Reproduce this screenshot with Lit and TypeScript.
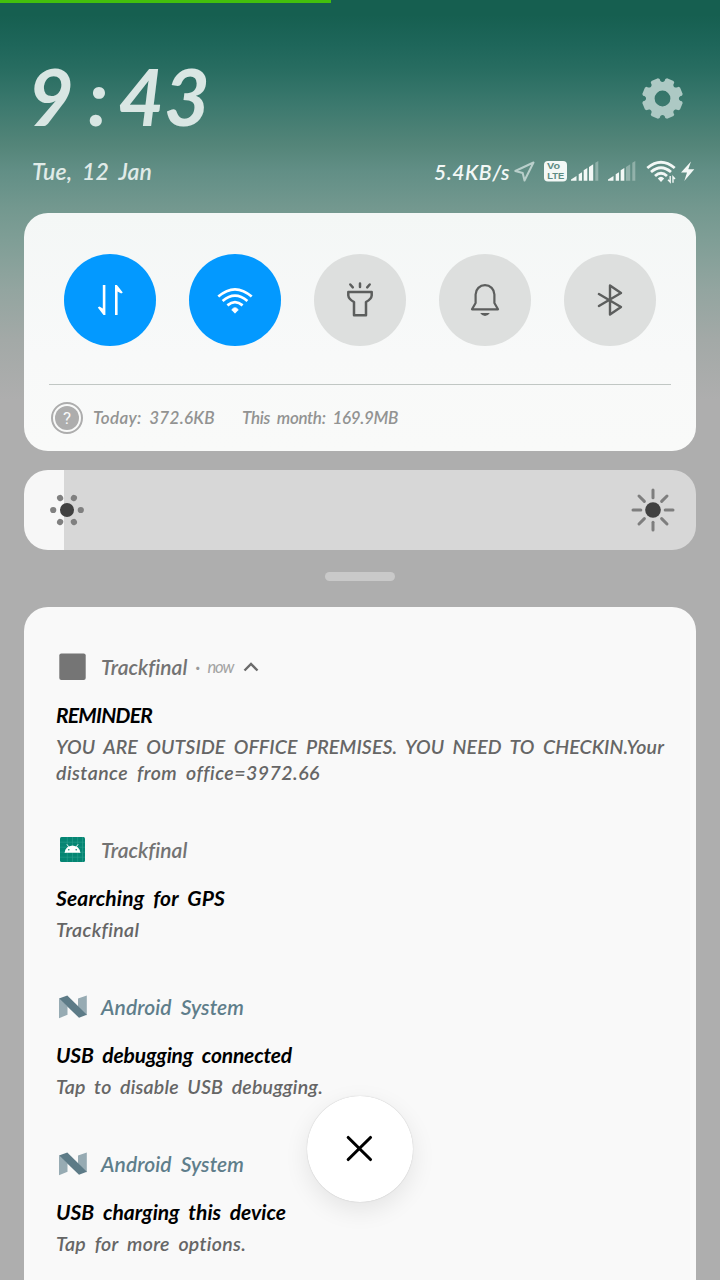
import { LitElement, html, svg, css } from "lit";
import { customElement, property } from "lit/decorators.js";

/** A single line of text whose tracking is adjusted so that it spans a given width. */
@customElement("fit-line")
class FitLine extends LitElement {
  @property() text = "";
  @property({ type: Number }) span = 0;
  static styles = css`
    :host { display: block; white-space: pre; }
    .t { display: inline-block; word-spacing: 0.2em; }
  `;
  firstUpdated() {
    const fit = () => {
      const el = this.renderRoot.querySelector(".t") as HTMLElement;
      el.style.letterSpacing = "0px";
      const w = el.getBoundingClientRect().width;
      el.style.letterSpacing = `${(this.span - w) / Math.max(1, this.text.length)}px`;
    };
    fit();
    document.fonts.ready.then(fit);
  }
  render() {
    return html`<span class="t">${this.text}</span>`;
  }
}

const line = (cls: string, text: string, span: number) =>
  html`<fit-line class=${cls} .text=${text} .span=${span}></fit-line>`;

/** Eight-toothed gear with a scooped notch between neighbouring teeth. */
const gearPath = (() => {
  const at = (r: number, a: number) => `${(20 + r * Math.cos(a)).toFixed(2)} ${(20 + r * Math.sin(a)).toFixed(2)}`;
  const step = Math.PI / 4;
  let d = "";
  for (let i = 0; i < 8; i++) {
    const a = (i + 0.5) * step;
    d += `${i ? "L" : "M"}${at(19.2, a - 0.25)}L${at(20.2, a - 0.17)}L${at(20.2, a + 0.17)}L${at(19.2, a + 0.25)}`;
    d += `C${at(15.2, a + 0.24)} ${at(15.2, a + step - 0.24)} ${at(19.2, a + step - 0.25)}`;
  }
  return d + "Z M27.7 20a7.7 7.7 0 1 0-15.4 0a7.7 7.7 0 1 0 15.4 0Z";
})();

const bars = [
  "M0 19.7V18.6L5.5 15V19.7Z",
  "M7.7 19.7V13.3L11 11.2V19.7Z",
  "M12.7 19.7V9.3L16.3 7V19.7Z",
  "M18 19.7V5.9L22.2 3.3V19.7Z",
  "M24.3 19.7V1.8L27.3 0V19.7Z",
];
const signal = (lit: number) =>
  svg`${bars.map((d, i) => svg`<path d=${d} fill="#f3f8f6" opacity=${i < lit ? 1 : 0.33}></path>`)}`;

const toggles = [
  { on: true, art: svg`<path d="M38.8 31H41.4V61H39.5L33.8 53.4L35.4 52.4L38.8 54.6Z" fill="#fff"></path><path d="M53.6 61H51V31H52.9L58.8 38.6L57.2 39.6L53.6 37.4Z" fill="#fff"></path>` },
  { on: true, art: svg`<g fill="none" stroke="#fff" stroke-width="2.7"><path d="M29.3 42.6Q46 28 62.7 42.6"></path><path d="M33.6 47Q46 36.3 58.4 47"></path><path d="M38.4 51.4Q46 45 53.6 51.4"></path></g><path d="M46 59.2L42.7 55.8Q46 51.6 49.3 55.8Z" fill="#fff" stroke="#fff" stroke-width=".8"></path>` },
  { on: false, art: svg`<g fill="none" stroke="#5c5e5d" stroke-width="2.5" stroke-linejoin="round" stroke-linecap="round"><path d="M34.3 38H57.7V41.5Q57.4 45 52 48V61.3H40V48Q34.6 45 34.3 41.5Z"></path><path d="M46 29.5V33M36.3 30.5L38.8 33.3M55.7 30.5L53.2 33.3"></path></g>` },
  { on: false, art: svg`<path d="M33 55.3L36.6 49V40.5a9.4 9.4 0 0 1 18.8 0V49L59 55.3Z" fill="none" stroke="#5c5e5d" stroke-width="2.2" stroke-linejoin="round"></path><path d="M41.2 59H50.8Q49 62 46 62Q43 62 41.2 59Z" fill="#5c5e5d"></path>` },
  { on: false, art: svg`<path d="M34.9 40L57 53L46 60.6V31.4L57 39L34.9 52" fill="none" stroke="#5c5e5d" stroke-width="2.4" stroke-linejoin="round" stroke-linecap="round"></path>` },
];

const square = svg`<rect x="3.3" y="2.4" width="26.4" height="26.6" rx="2" fill="#757575"></rect>`;
const droid = svg`<rect x="4" y="3" width="25" height="25" rx="1.5" fill="#058573"></rect>
  <path d="M11.3 3V28M16.5 3V28M21.7 3V28M26.5 3V28M4 8.2H29M4 13.2H29M4 18.2H29M4 23.2H29" stroke="#2ba08f" stroke-width=".6"></path>
  <path d="M9 18.8Q9.4 14.6 12.7 12.7L10.9 10.3M24 18.8Q23.6 14.6 20.3 12.7L22.1 10.3" stroke="#fff" stroke-width=".9" fill="none"></path>
  <path d="M9 18.8Q9.6 12.2 16.5 11.5Q23.4 12.2 24 18.8Z" fill="#fff"></path>
  <circle cx="12.8" cy="15.8" r=".8" fill="#058573"></circle><circle cx="20.2" cy="15.8" r=".8" fill="#058573"></circle>`;
const nougat = svg`<path d="M3 7.6L11.5 15.5V23.8L3 27.2ZM22 7.4L30.8 4.6V24.5L22 16.5Z" fill="#97abb3"></path>
  <path d="M3 7.6L11.3 4.6L30.8 23.8L23 26.8Z" fill="#5d7b87"></path>`;

const notes = [
  { icon: square, app: "Trackfinal", appW: 86, sys: false, now: true, title: "REMINDER", titleW: 96,
    body: [["YOU ARE OUTSIDE OFFICE PREMISES. YOU NEED TO CHECKIN.Your", 608], ["distance from office=3972.66", 263]] },
  { icon: droid, app: "Trackfinal", appW: 86, sys: false, now: false, title: "Searching for GPS", titleW: 169, body: [["Trackfinal", 83]] },
  { icon: nougat, app: "Android System", appW: 143, sys: true, now: false, title: "USB debugging connected", titleW: 236, body: [["Tap to disable USB debugging.", 267]] },
  { icon: nougat, app: "Android System", appW: 143, sys: true, now: false, title: "USB charging this device", titleW: 230, body: [["Tap for more options.", 190]] },
] as { icon: unknown; app: string; appW: number; sys: boolean; now: boolean; title: string; titleW: number; body: [string, number][] }[];

@customElement("app-root")
class AppRoot extends LitElement {
  static styles = css`
    :host {
      display: block; position: relative; width: 720px; height: 1280px; overflow: hidden; box-sizing: border-box;
      font-family: Lato, "Open Sans", sans-serif; font-style: italic; font-weight: 600;
      background: linear-gradient(#165f50 0, #165f50 15px, #1e665a 45px, #286d61 70px, #3c796e 105px, #548579 145px, #628f86 172px, #73988f 208px, #7f9e96 240px, #93a5a0 290px, #a3a9a7 340px, #aeaeae 400px, #aeaeae 100%);
    }
    * { box-sizing: border-box; }
    svg { display: block; flex: none; }
    .progress { width: 331px; height: 3px; background: #43c00d; }
    .top { display: flex; justify-content: space-between; height: 138px; padding: 52px 37px 0 28px; }
    .clock { font-size: 79px; line-height: 82px; font-weight: 700; color: #d9e6e3; white-space: pre; }
    .colon { padding: 0 10px 0 14px; }
    .gear { margin-top: 23px; }
    .status { display: flex; align-items: center; height: 60px; padding: 0 20px 0 32px; }
    .date { font-size: 23px; color: #e0ebe8; width: 402px; }
    .speed { font-size: 21px; color: #f3f8f6; width: 80px; }
    .volte { font: 700 8.5px "Liberation Sans", sans-serif; }
    .cards { display: flex; flex-direction: column; padding: 12px 24px 0; }
    .panel { height: 238px; border-radius: 24px; background: linear-gradient(#f4f7f6, #f8f9f9 60%, #f9faf9); padding: 41px 25px 0; }
    .toggles { display: flex; justify-content: space-between; padding: 0 15px; }
    .toggle { width: 92px; height: 92px; border-radius: 50%; background: #dddfde; }
    .toggle.on { background: #0399ff; }
    .usage { display: flex; align-items: center; margin-top: 38px; border-top: 1px solid #c1c7c4; height: 66px; padding-left: 2px; color: #929392; font-size: 17px; }
    .help { display: grid; place-items: center; width: 32px; height: 32px; border: 2px solid #adadad; border-radius: 50%; margin-right: 10px; }
    .help span { width: 24px; height: 24px; border-radius: 50%; background: #adadad; color: #f8f9f9; font: 400 17px/24px Roboto, sans-serif; text-align: center; }
    .today { width: 149px; }
    .brightness { display: flex; align-items: center; justify-content: space-between; height: 80px; margin-top: 19px; border-radius: 24px; padding: 0 21px 0 25px;
      background: linear-gradient(90deg, #f7f7f7 40px, #d7d7d7 40px); }
    .handle { align-self: center; width: 70px; height: 9px; border-radius: 5px; background: #c9c9c9; margin-top: 22px; }
    .list { height: 700px; margin-top: 26px; border-radius: 24px 24px 0 0; background: #f9f9f9; padding: 44px 32px 0; }
    .note { padding-bottom: 48px; }
    .head { display: flex; align-items: center; height: 31px; }
    .app { font-size: 21px; margin-left: 12px; color: #737373; line-height: 31px; }
    .sys { color: #5f7e8b; }
    .dot { margin: 0 7px 0 8px; color: #999; font-size: 19px; }
    .now { font-size: 16.5px; font-weight: 400; color: #a3a3a3; margin-right: 10px; }
    .title { font-size: 21px; line-height: 28px; color: #000; margin-top: 19px; font-weight: 700; }
    .body { font-size: 19.5px; line-height: 26px; color: #666; }
    .bodies { padding-top: 5px; }
    .close { position: absolute; left: 307px; top: 1096px; width: 106px; height: 106px; border-radius: 50%; background: #fff; box-shadow: 0 0 1px #0004, 0 8px 24px #00000016; }
  `;

  render() {
    return html`
      <div class="progress"></div>
      <div class="top">
        <div class="clock">9<span class="colon">:</span>43</div>
        <svg class="gear" width="41" height="41" viewBox="0 0 40 40"><path d=${gearPath} fill="#adc9c4" fill-rule="evenodd"></path></svg>
      </div>
      <div class="status">
        ${line("date", "Tue, 12 Jan", 120)}
        ${line("speed", "5.4KB/s", 76)}
        <svg width="186" height="28" viewBox="514 157 186 28">
          <path d="M533.5 162.5L524.5 180.5L522.7 173L515.3 171Z" fill="none" stroke="#b9cfcb" stroke-width="2" stroke-linejoin="round"></path>
          <rect x="544" y="161" width="23" height="20.5" rx="4" fill="#f3f8f6"></rect>
          <g class="volte" fill="#5d8c83" font-style="normal"><text x="547" y="169.4" textLength="13" lengthAdjust="spacingAndGlyphs">Vo</text><text x="547.3" y="179.4" textLength="17" lengthAdjust="spacingAndGlyphs">LTE</text></g>
          <g transform="translate(571 161)">${signal(4)}</g>
          <g transform="translate(608 161)">${signal(3)}</g>
          <g fill="none" stroke="#f3f8f6" stroke-width="2.8"><path d="M647.3 168Q661 156.5 674.7 168"></path><path d="M651 172Q661 163.5 671 172"></path><path d="M655 176Q661 170.5 667 176"></path></g>
          <path d="M661 182L657.8 178.4Q661 175 664.2 178.4Z" fill="#f3f8f6"></path>
          <path d="M670.2 176V182L668 179.8M673 182.8V176.8L675 179" stroke="#f3f8f6" stroke-width="1.4" fill="none"></path>
          <path d="M691 161.5L681 172.6H687L684.3 181L694.3 169.3H688.3Z" fill="#f3f8f6"></path>
        </svg>
      </div>
      <div class="cards">
        <section class="panel">
          <div class="toggles">
            ${toggles.map((t) => html`<div class="toggle ${t.on ? "on" : ""}"><svg width="92" height="92" viewBox="0 0 92 92">${t.art}</svg></div>`)}
          </div>
          <div class="usage">
            <div class="help"><span>?</span></div>
            ${line("today", "Today: 372.6KB", 122)}
            ${line("month", "This month: 169.9MB", 156)}
          </div>
        </section>
        <section class="brightness">
          <svg width="36" height="36" viewBox="-18 -18 36 36">
            <circle r="7" fill="#414141"></circle>
            ${[0, 60, 120, 180, 240, 300].map((a) => svg`<circle cx="13.8" r="3.1" fill="#808080" transform=${`rotate(${a})`}></circle>`)}
          </svg>
          <svg width="44" height="44" viewBox="-22 -22 44 44">
            <circle r="7.8" fill="#414141"></circle>
            ${[0, 45, 90, 135, 180, 225, 270, 315].map((a) => svg`<path d=${a % 90 ? "M12.2 0H19.8" : "M12.2 0H20"} stroke="#7e7e7e" stroke-width="3" stroke-linecap="round" transform=${`rotate(${a})`}></path>`)}
          </svg>
        </section>
        <div class="handle"></div>
        <section class="list">
          ${notes.map((n) => html`
            <article class="note">
              <div class="head">
                <svg width="33" height="31" viewBox="0 0 33 31">${n.icon}</svg>
                ${line(n.sys ? "app sys" : "app", n.app, n.appW)}
                ${n.now ? html`<span class="dot">·</span>${line("now", "now", 26)}
                  <svg width="16" height="12" viewBox="0 0 16 12"><path d="M1.5 9.5L8 3L14.5 9.5" fill="none" stroke="#6b6b6b" stroke-width="2.4"></path></svg>` : ""}
              </div>
              ${line("title", n.title, n.titleW)}
              <div class="bodies">${n.body.map(([t, w]) => line("body", t, w))}</div>
            </article>`)}
        </section>
      </div>
      <div class="close">
        <svg width="106" height="106" viewBox="0 0 106 106"><path d="M41.2 41.5L63.5 63.5M63.5 41.5L41.2 63.5" stroke="#000" stroke-width="3.1" stroke-linecap="round"></path></svg>
      </div>`;
  }
}
